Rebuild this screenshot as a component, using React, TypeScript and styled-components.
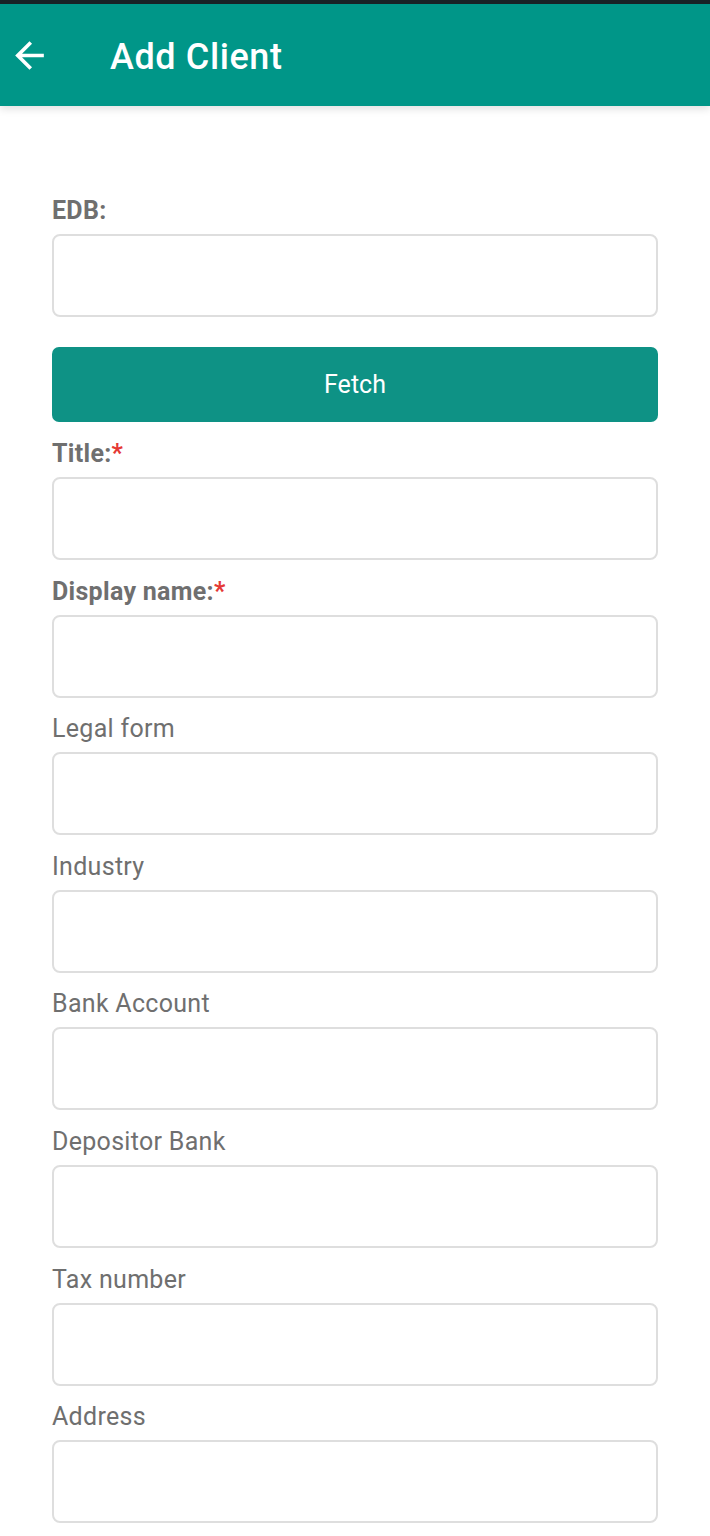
import styled, { createGlobalStyle } from "styled-components";

const GlobalStyle = createGlobalStyle`
    html, body {
        margin: 0;
        padding: 0;
        background: #ffffff;
        font-family: Roboto, "Liberation Sans", Arial, sans-serif;
    }
    * {
        box-sizing: border-box;
    }
`;

const Screen = styled.div`
    width: 710px;
    min-height: 1536px;
    background: #ffffff;
    border-top: 4px solid #182226;
    overflow: hidden;
`;

const AppBar = styled.header`
    display: flex;
    align-items: center;
    height: 102px;
    padding: 0 0 0 8px;
    background: #009688;
    box-shadow: 0 3px 8px rgba(0, 0, 0, 0.12);
    position: relative;
    z-index: 1;
`;

const BackButton = styled.button`
    display: flex;
    align-items: center;
    justify-content: center;
    width: 43px;
    height: 43px;
    padding: 0;
    border: none;
    background: transparent;
    cursor: pointer;
`;

const Heading = styled.h1`
    margin: 4px 0 0 59px;
    color: #ffffff;
    font-size: 36px;
    font-weight: 500;
    letter-spacing: 0.6px;
`;

const Form = styled.form`
    display: flex;
    flex-direction: column;
    padding: 90px 52px 12px;
`;

const Field = styled.div<{ $spacing?: number }>`
    display: flex;
    flex-direction: column;
    margin-bottom: ${({ $spacing }) => $spacing ?? 16.6}px;
`;

const Label = styled.label<{ $bold?: boolean }>`
    height: 26px;
    line-height: 30px;
    margin-bottom: 12px;
    color: #6f6f6f;
    font-size: 25px;
    letter-spacing: 0.3px;
    font-weight: ${({ $bold }) => ($bold ? 700 : 400)};
`;

const Required = styled.span`
    color: #e53935;
`;

const Input = styled.input`
    width: 100%;
    height: 83px;
    padding: 0 18px;
    border: 2px solid #dedede;
    border-radius: 8px;
    background: #ffffff;
    font-family: inherit;
    font-size: 22px;
    color: #333333;
    outline: none;
`;

const FetchButton = styled.button`
    height: 75px;
    margin-bottom: 17px;
    border: none;
    border-radius: 7px;
    background: #0e9285;
    color: #ffffff;
    font-family: inherit;
    font-size: 25px;
    font-weight: 400;
    cursor: pointer;
`;

const BackArrow = () => (
    <svg width="43" height="43" viewBox="0 0 24 24" fill="#ffffff">
        <path d="M20 11H7.83l5.59-5.59L12 4l-8 8 8 8 1.41-1.41L7.83 13H20v-2z" />
    </svg>
);

const optionalFields = [
    "Legal form",
    "Industry",
    "Bank Account",
    "Depositor Bank",
    "Tax number",
    "Address",
];

export default function App() {
    return (
        <>
            <GlobalStyle />
            <Screen>
                <AppBar>
                    <BackButton type="button" aria-label="Back">
                        <BackArrow />
                    </BackButton>
                    <Heading>Add Client</Heading>
                </AppBar>
                <Form onSubmit={(e) => e.preventDefault()}>
                    <Field $spacing={30}>
                        <Label $bold>EDB:</Label>
                        <Input />
                    </Field>
                    <FetchButton type="button">Fetch</FetchButton>
                    <Field>
                        <Label $bold>
                            Title:<Required>*</Required>
                        </Label>
                        <Input />
                    </Field>
                    <Field>
                        <Label $bold>
                            Display name:<Required>*</Required>
                        </Label>
                        <Input />
                    </Field>
                    {optionalFields.map((name) => (
                        <Field key={name}>
                            <Label>{name}</Label>
                            <Input />
                        </Field>
                    ))}
                </Form>
            </Screen>
        </>
    );
}
